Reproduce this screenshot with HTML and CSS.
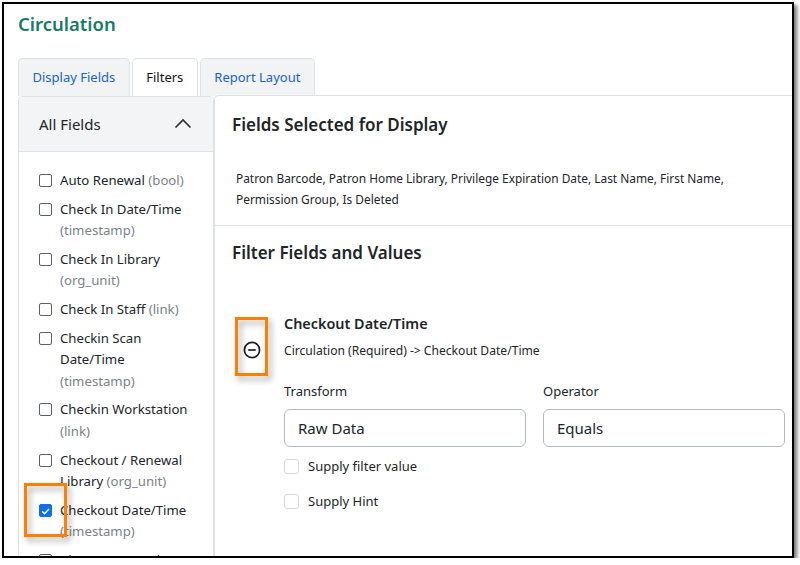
FILE: index.html
```html
<!DOCTYPE html>
<html>
<head>
  <meta charset="UTF-8" />
  <title>Circulation</title>
  <link rel="stylesheet" href="styles.css">
</head>
<body>

  <div class="frame">
    <h1 class="page-title">Circulation</h1>

    <div class="tabs">
      <div class="tab">Display Fields</div>
      <div class="tab active">Filters</div>
      <div class="tab">Report Layout</div>
    </div>

    <div class="workspace">
      <div class="field-panel">
        <div class="field-panel-head">
          <span>All Fields</span>
          <svg class="chevron" width="18" height="12" viewBox="0 0 18 12">
            <polyline points="1.5,10.5 9,3 16.5,10.5" fill="none" stroke="#2b2f33" stroke-width="1.6" />
          </svg>
        </div>
        <ul class="field-list">
          <li><span class="box"></span><span>Auto Renewal <em>(bool)</em></span></li>
          <li><span class="box"></span><span>Check In Date/Time <em>(timestamp)</em></span></li>
          <li><span class="box"></span><span>Check In Library <em>(org_unit)</em></span></li>
          <li><span class="box"></span><span>Check In Staff <em>(link)</em></span></li>
          <li><span class="box"></span><span>Checkin Scan Date/Time <em>(timestamp)</em></span></li>
          <li><span class="box"></span><span>Checkin Workstation <em>(link)</em></span></li>
          <li><span class="box"></span><span>Checkout / Renewal Library <em>(org_unit)</em></span></li>
          <li>
            <span class="box checked">
              <svg width="13" height="13" viewBox="0 0 13 13">
                <polyline points="3,6.8 5.4,9.2 10,4" fill="none" stroke="#fff" stroke-width="1.8" stroke-linecap="round" stroke-linejoin="round" />
              </svg>
            </span>
            <span>Checkout Date/Time <em>(timestamp)</em></span>
          </li>
          <li><span class="box"></span><span>Circ Due Date/Time <em>(timestamp)</em></span></li>
        </ul>
      </div>

      <div class="main-panel">
        <div class="selected">
          <h2 class="section-title">Fields Selected for Display</h2>
          <p class="selected-list">Patron Barcode, Patron Home Library, Privilege Expiration Date, Last Name, First Name, Permission Group, Is Deleted</p>
        </div>

        <div class="filters">
          <h2 class="section-title">Filter Fields and Values</h2>

          <div class="filter-item">
            <div class="remove">
              <svg width="18" height="18" viewBox="0 0 18 18">
                <circle cx="9" cy="9" r="7.6" fill="none" stroke="#1c1f22" stroke-width="1.7" />
                <line x1="5.2" y1="9" x2="12.8" y2="9" stroke="#1c1f22" stroke-width="1.7" />
              </svg>
            </div>
            <div class="filter-body">
              <div class="filter-name">Checkout Date/Time</div>
              <div class="filter-path">Circulation (Required) -&gt; Checkout Date/Time</div>

              <div class="filter-form">
                <label class="form-field">
                  <span>Transform</span>
                  <span class="input">Raw Data</span>
                </label>
                <label class="form-field">
                  <span>Operator</span>
                  <span class="input">Equals</span>
                </label>
              </div>

              <div class="option"><span class="box light"></span>Supply filter value</div>
              <div class="option"><span class="box light"></span>Supply Hint</div>
            </div>
          </div>
        </div>
      </div>
    </div>

    <div class="callout callout-remove"></div>
    <div class="callout callout-check"></div>
  </div>

</body>
</html>
```

FILE: styles.css
```css
html, body {
  margin: 0;
  background: #fff;
  font-family: "Noto Sans", "Open Sans", sans-serif;
  color: #212529;
}

.frame {
  position: relative;
  box-sizing: border-box;
  width: 792px;
  height: 556px;
  margin: 2px 0 0 2px;
  padding-left: 14px;
  border: 2px solid #000;
  background: #fff;
  overflow: hidden;
  box-shadow: 3px 3px 4px rgba(0, 0, 0, 0.55);
}

.page-title {
  margin: 7px 0 0;
  font-size: 18.5px;
  line-height: 26px;
  font-weight: 600;
  color: #197a68;
}

.tabs {
  display: flex;
  gap: 2px;
  margin-top: 21px;
}

.tab {
  padding: 0 13.5px;
  height: 37px;
  line-height: 37px;
  font-size: 13px;
  color: #1862d6;
  background: #f1f3f5;
  border: 1px solid #dee2e6;
  border-bottom: none;
  border-radius: 5px 5px 0 0;
}

.tab.active {
  color: #111;
  background: #fff;
}

.workspace {
  display: flex;
  height: 470px;
}

.field-panel {
  width: 194px;
  border: 1px solid #dee2e6;
  border-radius: 5px 5px 0 0;
  border-bottom: none;
}

.field-panel-head {
  display: flex;
  align-items: center;
  justify-content: space-between;
  height: 54px;
  padding: 0 21px 0 20px;
  background: #f3f4f6;
  border-bottom: 1px solid #dee2e6;
  border-radius: 5px 5px 0 0;
  font-size: 15px;
}

.chevron {
  margin-top: -2px;
}

.field-list {
  list-style: none;
  margin: 0;
  padding: 18px 14px 0 20px;
  font-size: 13.2px;
  line-height: 21.6px;
}

.field-list li {
  display: flex;
  gap: 8px;
  margin-bottom: 7px;
}

.field-list em {
  font-style: normal;
  color: #7b8289;
}

.box {
  flex: none;
  box-sizing: border-box;
  display: inline-flex;
  width: 13px;
  height: 13px;
  margin-top: 4px;
  border: 1px solid #5c6166;
  border-radius: 2px;
  background: #fff;
}

.box.checked {
  background: #0f6ef0;
  border-color: #0f6ef0;
}

.box.light {
  width: 15px;
  height: 15px;
  margin: 0 9px 0 0;
  border-color: #d5d9dd;
  border-radius: 3px;
}

.main-panel {
  flex: 1;
  border: 1px solid #dee2e6;
  border-right: none;
  border-radius: 5px 0 0 0;
  margin-top: -1px;
}

.section-title {
  margin: 0;
  font-size: 17px;
  line-height: 24px;
  font-weight: 600;
  color: #212529;
}

.selected {
  height: 112px;
  padding: 17px 18px 0 17px;
  border-bottom: 1px solid #dee2e6;
}

.selected-list {
  margin: 31px 0 0 4px;
  font-size: 11.9px;
  line-height: 21px;
}

.filters {
  padding: 15px 0 0 17px;
}

.filter-item {
  display: flex;
  margin-top: 49px;
}

.remove {
  width: 52px;
  padding: 27px 0 0 11px;
  box-sizing: border-box;
}

.filter-body {
  flex: 1;
}

.filter-name {
  font-size: 14.4px;
  font-weight: 600;
  line-height: 20px;
}

.filter-path {
  margin-top: 7px;
  font-size: 12.1px;
  line-height: 20px;
}

.filter-form {
  display: flex;
  gap: 17px;
  margin-top: 20px;
}

.form-field {
  display: flex;
  flex-direction: column;
  gap: 8px;
  width: 242px;
  font-size: 13px;
  line-height: 20px;
}

.input {
  box-sizing: border-box;
  height: 38px;
  padding: 0 13px;
  border: 1px solid #b3b9bf;
  border-radius: 6px;
  font-size: 15px;
  line-height: 36px;
}

.option {
  display: flex;
  align-items: center;
  height: 20px;
  margin-top: 9px;
  font-size: 13px;
}

.option + .option {
  margin-top: 15px;
}

.callout {
  position: absolute;
  box-sizing: border-box;
  border: 3px solid #ff7f00;
  filter: drop-shadow(3px 4px 3px rgba(0, 0, 0, 0.35));
}

.callout-remove {
  left: 231px;
  top: 313px;
  width: 33px;
  height: 59px;
}

.callout-check {
  left: 20px;
  top: 479px;
  width: 43px;
  height: 54px;
}
```
